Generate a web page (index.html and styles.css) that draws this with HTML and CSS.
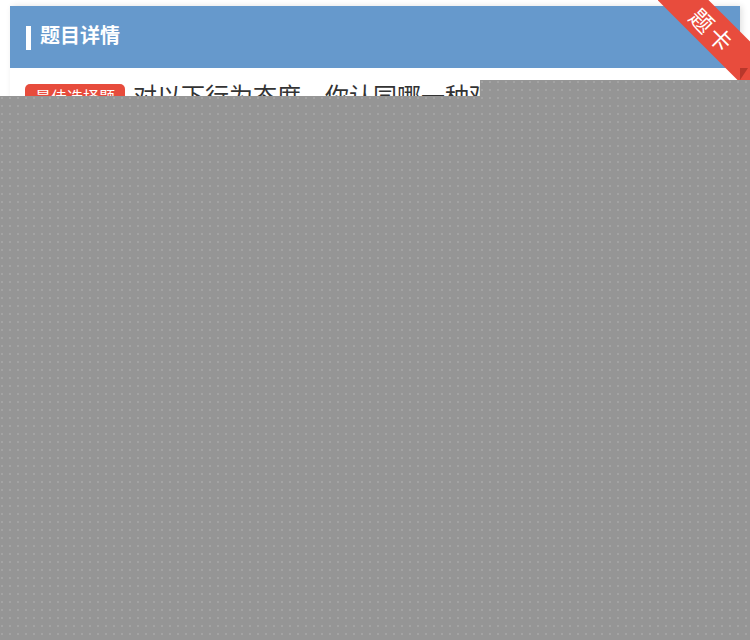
FILE: index.html
```html
<!DOCTYPE html>
<html lang="zh">
<head>
<meta charset="utf-8">
<title>题目详情</title>
<link rel="stylesheet" href="styles.css">
</head>
<body>
<div class="page">
  <div class="card">
    <div class="card-head">
      <span class="head-bar"></span>
      <h1 class="head-title">题目详情</h1>
    </div>
    <div class="question">
      <span class="tag">最佳选择题</span>
      <span class="q-text">对以下行为态度，你认同哪一种观点？</span>
    </div>
  </div>
  <div class="ribbon-wrap">
    <div class="ribbon">题卡</div>
  </div>
  <div class="ribbon-fold"></div>
  <div class="mask mask-top"></div>
  <div class="mask mask-main"></div>
</div>
</body>
</html>
```
FILE: styles.css
```css
* { box-sizing: border-box; }
html, body {
  margin: 0;
  padding: 0;
  background: #ffffff;
  font-family: "Noto Sans CJK SC", "Liberation Sans", sans-serif;
}
.page {
  position: relative;
  width: 750px;
  height: 640px;
  overflow: hidden;
  padding: 6px 10px 0 10px;
}
.card {
  background: #ffffff;
  box-shadow: 2px 0 6px rgba(0, 0, 0, 0.12);
  min-height: 200px;
}
.card-head {
  height: 62px;
  background: #6699cc;
  display: flex;
  align-items: center;
  padding-left: 16px;
}
.head-bar {
  width: 5px;
  height: 24px;
  background: #ffffff;
  margin-right: 9px;
  margin-top: 2px;
}
.head-title {
  margin: 0 0 4px 0;
  color: #ffffff;
  font-size: 20px;
  font-weight: bold;
  line-height: 28px;
}
.question {
  display: flex;
  align-items: center;
  padding: 12px 0 0 15px;
}
.tag {
  background: #e74c3c;
  color: #ffffff;
  font-size: 16px;
  line-height: 20px;
  padding: 2px 10px;
  border-radius: 5px;
  margin-right: 8px;
  margin-top: 2px;
}
.q-text {
  color: #333333;
  font-size: 24px;
  line-height: 30px;
  white-space: nowrap;
}
.ribbon-wrap {
  position: absolute;
  top: 0;
  right: 0;
  width: 92px;
  height: 80px;
  overflow: hidden;
}
.ribbon {
  position: absolute;
  left: -30px;
  top: 12px;
  width: 170px;
  height: 36px;
  line-height: 36px;
  background: #e84c3d;
  color: #ffffff;
  font-size: 23px;
  text-align: center;
  letter-spacing: 3px;
  transform: rotate(45deg);
}
.ribbon-fold {
  position: absolute;
  top: 68px;
  left: 740px;
  width: 0;
  height: 0;
  border-left: 8px solid #b8372b;
  border-bottom: 12px solid transparent;
}
.mask {
  position: absolute;
  background-color: #959595;
  background-image: radial-gradient(circle at 2px 2px, #a3a3a3 0, #a3a3a3 0.8px, transparent 1.3px);
  background-size: 8px 8px;
}
.mask-top {
  left: 480px;
  top: 80px;
  width: 270px;
  height: 17px;
}
.mask-main {
  left: 0;
  top: 96px;
  width: 750px;
  height: 544px;
}
```
